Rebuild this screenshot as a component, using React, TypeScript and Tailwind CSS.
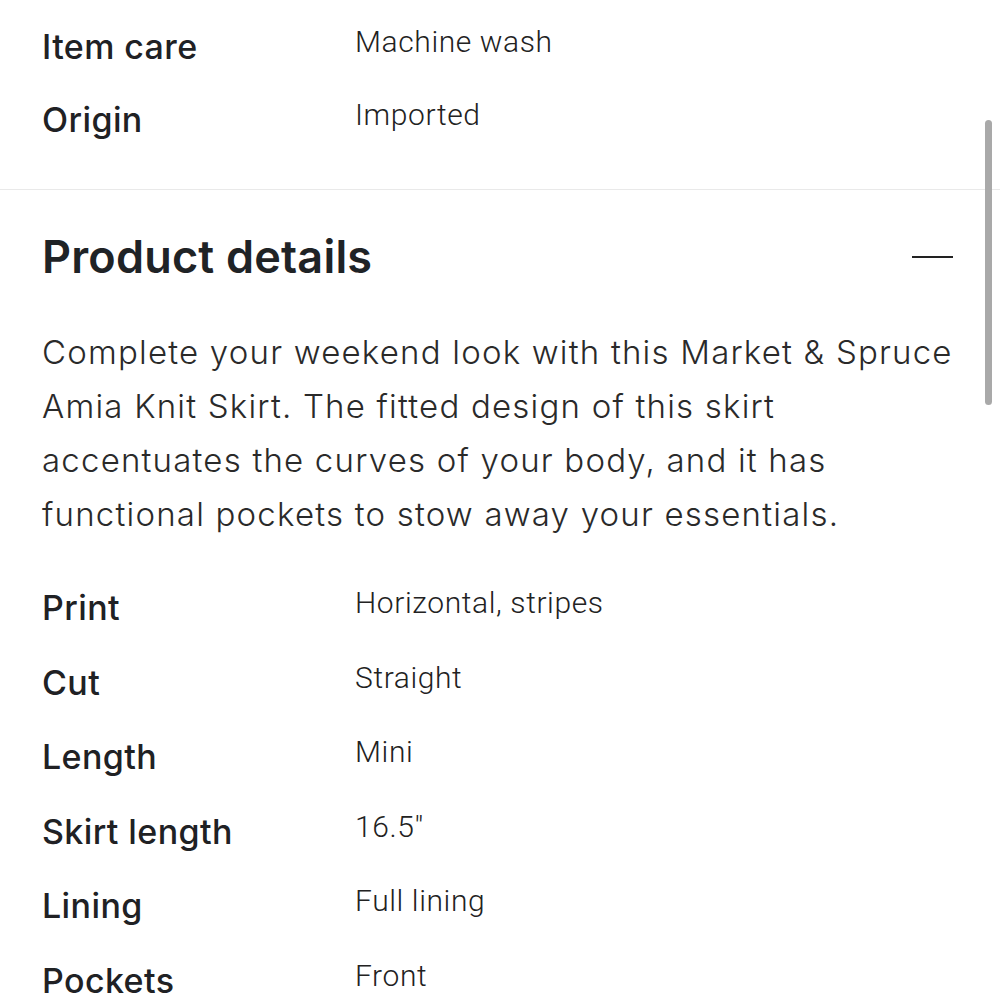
import React from "react";

const top = [
  ["Item care", "Machine wash"],
  ["Origin", "Imported"],
];

const details = [
  ["Print", "Horizontal, stripes"],
  ["Cut", "Straight"],
  ["Length", "Mini"],
  ["Skirt length", '16.5"'],
  ["Lining", "Full lining"],
  ["Pockets", "Front"],
];

function Row({ label, value, h }: { label: string; value: string; h: string }) {
  return (
    <div className={`grid grid-cols-[313px_1fr] items-start ${h}`}>
      <div className="text-[34px] leading-[40px] font-medium text-[#202124] tracking-[0.4px]">{label}</div>
      <div className="text-[30px] leading-[30px] font-light text-[#222] tracking-[0.6px] font-['Roboto',sans-serif]">{value}</div>
    </div>
  );
}

export default function App() {
  return (
    <div className="relative w-[1000px] h-[1000px] overflow-hidden bg-white font-['Inter',sans-serif]">
      <div className="pl-[42px] pt-[27px] pb-[16px] border-b border-[#e9e9e9]">
        {top.map(([l, v]) => (
          <Row key={l} label={l} value={v} h="h-[73px]" />
        ))}
      </div>
      <div className="pl-[42px] pr-[40px]">
        <div className="mt-[41px] flex items-center justify-between pr-[7px]">
          <h2 className="text-[45px] leading-[52px] font-semibold text-[#1f2326] tracking-[0.2px]">Product details</h2>
          <div className="w-[41px] h-[2px] bg-[#222]" />
        </div>
        <p className="mt-[42px] text-[33px] leading-[54px] font-light text-[#2a2a2a] tracking-[1.2px]">
          Complete your weekend look with this Market &amp; Spruce Amia Knit Skirt. The fitted design of this skirt
          accentuates the curves of your body, and it has functional pockets to stow away your essentials.
        </p>
        <div className="mt-[47px]">
          {details.map(([l, v]) => (
            <Row key={l} label={l} value={v} h="h-[74.5px]" />
          ))}
        </div>
      </div>
      <div className="absolute left-[985px] top-[120px] w-[7px] h-[285px] rounded-full bg-[#a9a9a9]" />
    </div>
  );
}
